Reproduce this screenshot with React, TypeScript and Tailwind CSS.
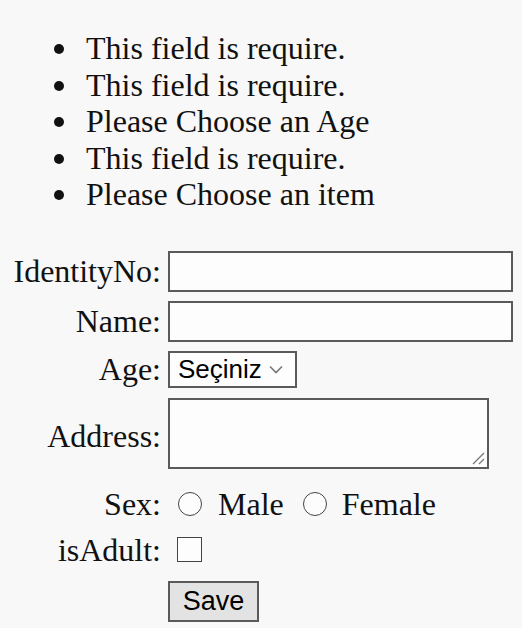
import React from "react";

export default function App() {
  const items = [
    "This field is require.",
    "This field is require.",
    "Please Choose an Age",
    "This field is require.",
    "Please Choose an item",
  ];
  const serif = { fontFamily: '"Liberation Serif", "Times New Roman", serif' };
  return (
    <div className="w-[522px] h-[628px] bg-[#f8f8f8] text-[#111] overflow-hidden" style={serif}>
      <ul className="pt-[30px] text-[32px] leading-[36.5px]">
        {items.map((t, i) => (
          <li key={i} className="flex items-center">
            <span className="ml-[54px] w-[10px] h-[10px] rounded-full bg-[#111] mt-[2px]" />
            <span className="ml-[22px]">{t}</span>
          </li>
        ))}
      </ul>
      <div className="mt-[38px] grid grid-cols-[161px_1fr] gap-x-[7px] text-[32px] leading-none">
        <div className="flex items-center justify-end h-[41px]">IdentityNo:</div>
        <div className="h-[41px] w-[345px] border-2 border-[#5a5a5a] bg-[#fdfdfd]" />

        <div className="mt-[9px] flex items-center justify-end h-[41px]">Name:</div>
        <div className="mt-[9px] h-[41px] w-[345px] border-2 border-[#5a5a5a] bg-[#fdfdfd]" />

        <div className="mt-[9px] flex items-center justify-end h-[37px]">Age:</div>
        <div className="mt-[9px] h-[37px] w-[129px] border-2 border-[#5a5a5a] bg-[#fdfdfd] flex items-center pl-[8px]">
          <span className="text-[26px] text-black" style={{ fontFamily: '"Liberation Sans", Arial, sans-serif' }}>Seçiniz</span>
          <svg className="ml-[7px]" width="14" height="9" viewBox="0 0 14 9">
            <path d="M1 1.5 L7 7.5 L13 1.5" fill="none" stroke="#777" strokeWidth="1.6" />
          </svg>
        </div>

        <div className="mt-[10px] flex items-center justify-end h-[71px] pt-[6px]">Address:</div>
        <div className="mt-[10px] h-[71px] w-[321px] border-2 border-[#5a5a5a] bg-[#fdfdfd] relative">
          <svg className="absolute right-[2px] bottom-[2px]" width="14" height="14" viewBox="0 0 14 14">
            <path d="M2 13 L13 2 M8 13 L13 8" stroke="#777" strokeWidth="1.3" />
          </svg>
        </div>

        <div className="mt-[23px] flex items-center justify-end h-[24px]">Sex:</div>
        <div className="mt-[23px] flex items-center h-[24px]">
          <span className="ml-[10px] w-[24px] h-[24px] rounded-full border-[1.5px] border-[#444] bg-[#fdfdfd]" />
          <span className="ml-[16px]">Male</span>
          <span className="ml-[19px] w-[24px] h-[24px] rounded-full border-[1.5px] border-[#444] bg-[#fdfdfd]" />
          <span className="ml-[15px]">Female</span>
        </div>

        <div className="mt-[21px] flex items-center justify-end h-[26px]">isAdult:</div>
        <div className="mt-[21px] flex items-center h-[26px]">
          <span className="ml-[9px] w-[25px] h-[25px] border-[1.5px] border-[#444] bg-[#fdfdfd]" />
        </div>

        <div className="mt-[18px]" />
        <div className="mt-[18px]">
          <div className="w-[91px] h-[41px] border-2 border-[#5a5a5a] bg-[#e3e3e3] flex items-center justify-center text-[27px] text-black" style={{ fontFamily: '"Liberation Sans", Arial, sans-serif' }}>
            Save
          </div>
        </div>
      </div>
    </div>
  );
}
